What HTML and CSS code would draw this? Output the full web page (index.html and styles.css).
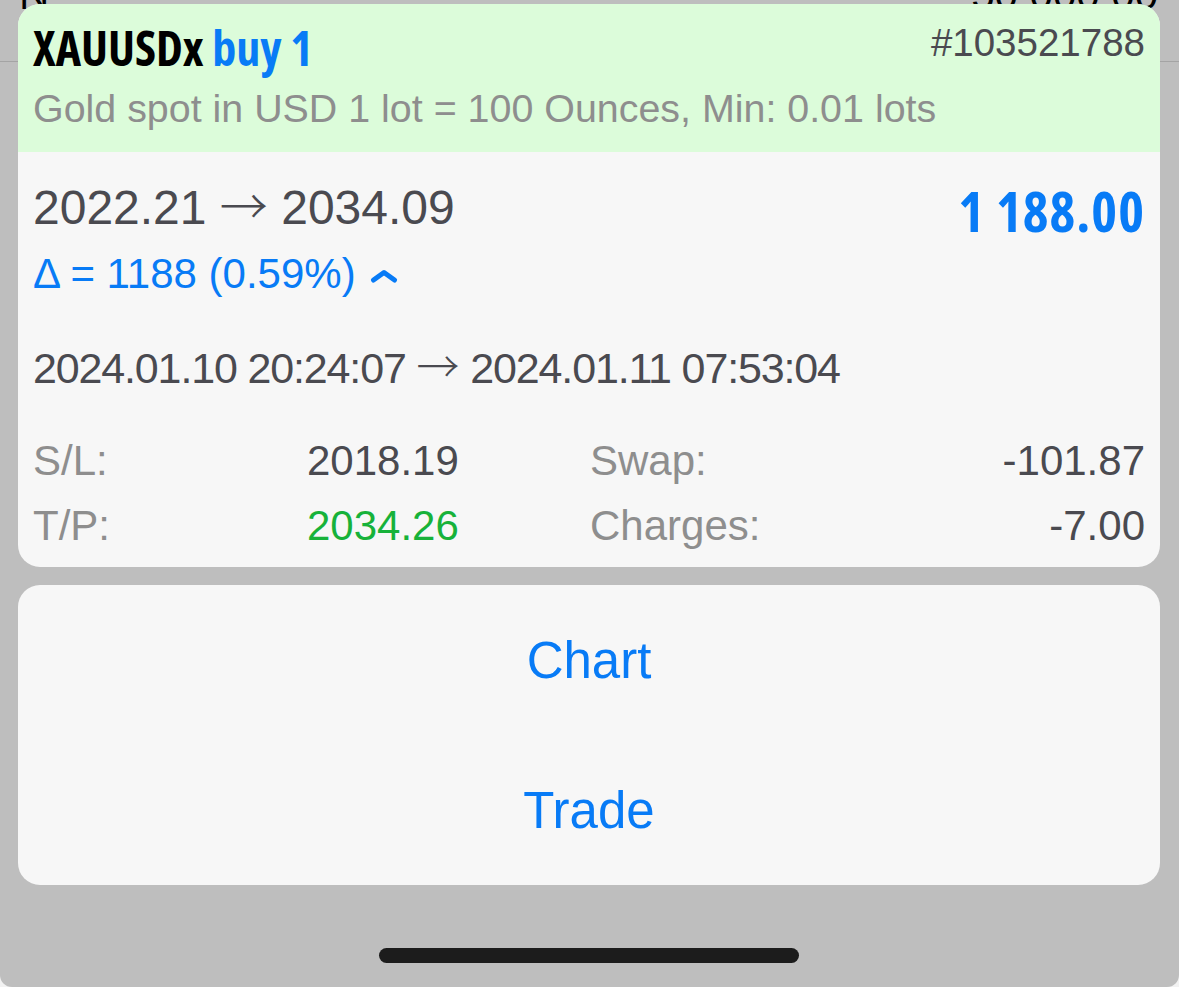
FILE: index.html
```html
<!DOCTYPE html>
<html lang="en">
<head>
<meta charset="utf-8">
<title>XAUUSDx position</title>
<link rel="stylesheet" href="styles.css">
</head>
<body>
<div class="screen">
  <div class="backdrop">
    <div class="bg-row">
      <span class="bg-left">N</span>
      <span class="bg-right">50 000.00</span>
    </div>
  </div>

  <div class="sheet">
    <div class="card info">
      <div class="head">
        <div class="head-top">
          <div class="title">XAUUSDx <span class="blue">buy 1</span></div>
          <div class="ticket">#103521788</div>
        </div>
        <div class="desc">Gold spot in USD 1 lot = 100 Ounces, Min: 0.01 lots</div>
      </div>
      <div class="body">
        <div class="price-row">
          <div class="prices">2022.21 <span class="arrow">→</span> 2034.09</div>
          <div class="profit">1 188.00</div>
        </div>
        <div class="delta">Δ = 1188 (0.59%)<svg class="chev" width="28" height="14" viewBox="0 0 28 14"><polyline points="3.5,11 14,3.5 24.5,11" fill="none" stroke="currentColor" stroke-width="5" stroke-linecap="round" stroke-linejoin="round"/></svg></div>
        <div class="times">2024.01.10 20:24:07 <span class="arrow">→</span> 2024.01.11 07:53:04</div>
        <div class="stats">
          <div class="lbl">S/L:</div>
          <div class="val">2018.19</div>
          <div class="lbl">Swap:</div>
          <div class="val right">-101.87</div>
          <div class="lbl">T/P:</div>
          <div class="val green">2034.26</div>
          <div class="lbl">Charges:</div>
          <div class="val right">-7.00</div>
        </div>
      </div>
    </div>

    <div class="card actions">
      <div class="action">Chart</div>
      <div class="action">Trade</div>
    </div>

    <div class="home-indicator"></div>
  </div>
</div>
</body>
</html>
```

FILE: styles.css
```css
* { box-sizing: border-box; }

html, body {
  margin: 0;
  padding: 0;
  background: #f2f2f2;
}

body {
  font-family: "Liberation Sans", Arial, sans-serif;
}

.screen {
  position: relative;
  width: 1179px;
  height: 987px;
  background: #bebebe;
  border-radius: 0 0 12px 12px;
  overflow: hidden;
}

/* dimmed page behind the sheet */
.backdrop {
  height: 62px;
  border-bottom: 1px solid #a4a4a4;
  overflow: hidden;
}

.bg-row {
  display: flex;
  justify-content: space-between;
  margin-top: -25px;
  padding: 0 21px 0 19px;
  font-size: 42px;
  line-height: 40px;
  color: #000;
}

/* sheet overlay */
.sheet {
  position: absolute;
  top: 4px;
  left: 18px;
  width: 1142px;
  display: flex;
  flex-direction: column;
  gap: 18px;
}

.card {
  border-radius: 22px;
  overflow: hidden;
  background: #f7f7f7;
}

.head {
  background: #dcfcda;
  padding: 11px 15px 20px;
}

.head-top {
  display: flex;
  justify-content: space-between;
  align-items: flex-start;
}

.title {
  margin-top: 5px;
  font-family: "Open Sans", "DejaVu Sans Condensed", sans-serif;
  font-stretch: 75%;
  font-weight: 700;
  font-size: 48px;
  line-height: 56px;
  color: #000;
}

.blue { color: #087bf6; }

.ticket {
  font-size: 38.5px;
  line-height: 56px;
  color: #4a4a50;
}

.desc {
  margin-top: 8px;
  font-size: 39.4px;
  line-height: 48px;
  color: #8e8e8e;
}

.body {
  padding: 26px 15px 9px;
}

.price-row {
  display: flex;
  justify-content: space-between;
  align-items: flex-start;
}

.prices {
  font-size: 48px;
  line-height: 60px;
  color: #4a4a50;
}

.arrow {
  font-family: "Noto Sans CJK JP", "DejaVu Sans", sans-serif;
  font-weight: 300;
  line-height: 0;
}

.profit {
  margin-top: 6px;
  font-family: "Open Sans", "DejaVu Sans Condensed", sans-serif;
  font-stretch: 75%;
  font-weight: 700;
  font-size: 55px;
  line-height: 54px;
  letter-spacing: 1px;
  color: #087bf6;
}

.delta {
  margin-top: 11px;
  display: flex;
  align-items: center;
  font-size: 42px;
  line-height: 50px;
  color: #087bf6;
}

.chev {
  margin-left: 14px;
  margin-top: 4px;
}

.times {
  margin-top: 43px;
  font-size: 43px;
  line-height: 52px;
  letter-spacing: -1.15px;
  color: #4a4a50;
}

.times .arrow {
  letter-spacing: 0;
}

.stats {
  margin-top: 34px;
  display: grid;
  grid-template-columns: 274px 283px 1fr auto;
  font-size: 42px;
  line-height: 65px;
}

.lbl { color: #8e8e8e; }
.val { color: #4a4a50; }
.val.right { text-align: right; }
.val.green { color: #17b23a; }

.actions {
  display: flex;
  flex-direction: column;
}

.action {
  height: 150px;
  display: flex;
  align-items: center;
  justify-content: center;
  font-size: 51px;
  color: #087bf6;
}

.home-indicator {
  align-self: center;
  margin-top: 45px;
  width: 420px;
  height: 15px;
  border-radius: 8px;
  background: #1c1c1c;
}
```
